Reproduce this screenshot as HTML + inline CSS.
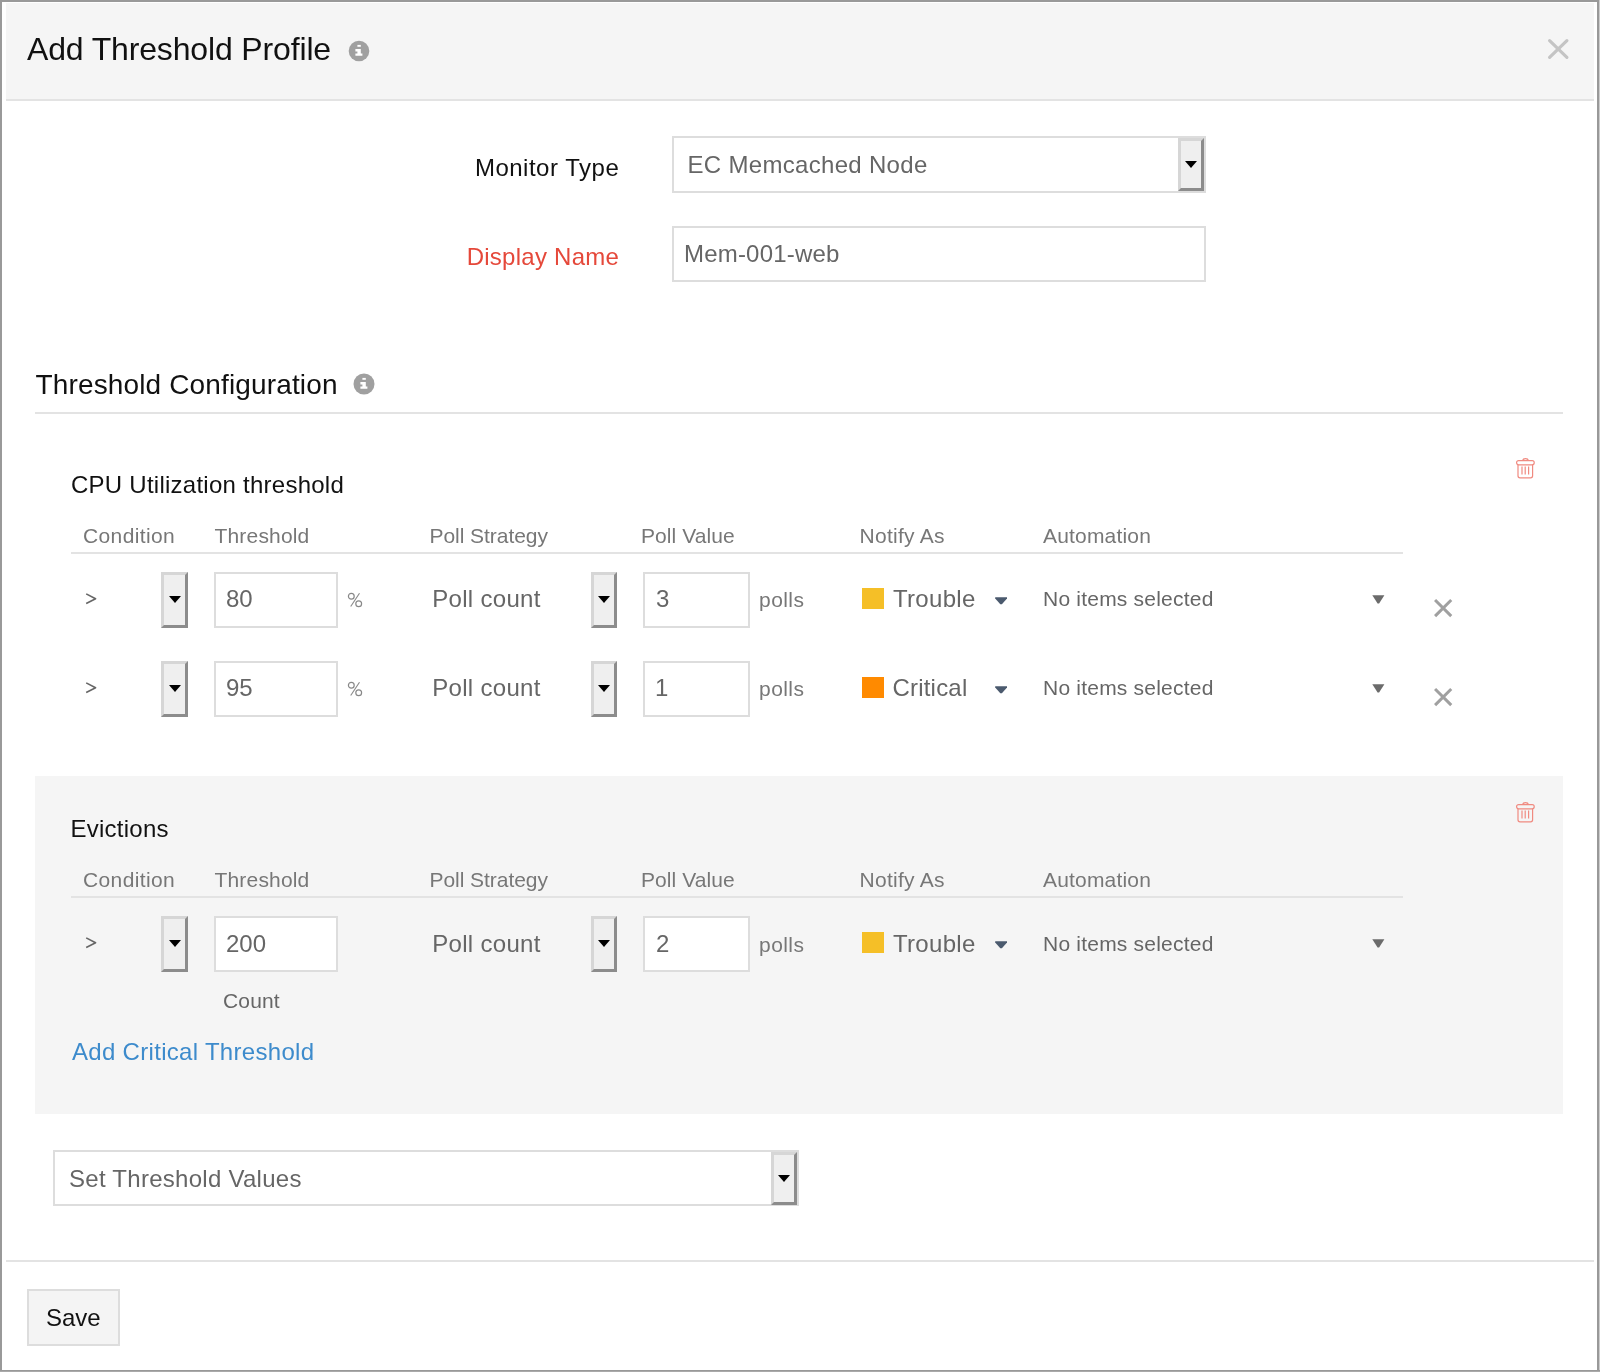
<!DOCTYPE html>
<html><head><meta charset="utf-8">
<style>
*{margin:0;padding:0;box-sizing:border-box}
html,body{width:1600px;height:1372px;overflow:hidden;background:#fff}
body{position:relative;font-family:"Liberation Sans",sans-serif}
#w{position:absolute;left:0;top:0;width:1600px;height:1372px;will-change:transform}
.a{position:absolute}
.t{position:absolute;white-space:nowrap;line-height:1}
.box{position:absolute;border:2px solid #ddd;background:#fff}
.btn3d{position:absolute;border-style:solid;border-width:3px;border-color:#d6d6d6 #8c8c8c #8c8c8c #d6d6d6;background:#efefef}
.btn3d:after{content:"";position:absolute;left:50%;top:50%;margin-left:-6px;margin-top:-4px;border-left:6px solid transparent;border-right:6px solid transparent;border-top:7px solid #000}
</style></head>
<body>
<div id="w">
<div class="a" style="left:0px;top:0px;width:1600px;height:2px;background:#999"></div>
<div class="a" style="left:0px;top:0px;width:2px;height:1372px;background:#999"></div>
<div class="a" style="left:1597px;top:0px;width:2px;height:1372px;background:#999"></div>
<div class="a" style="left:1599px;top:0px;width:1px;height:1372px;background:#ccc"></div>
<div class="a" style="left:0px;top:1370px;width:1600px;height:1px;background:#999"></div>
<div class="a" style="left:0px;top:1371px;width:1600px;height:1px;background:#aaa"></div>
<div class="a" style="left:6px;top:3px;width:1588px;height:96px;background:#f5f5f5"></div>
<div class="a" style="left:6px;top:99px;width:1588px;height:2px;background:#e3e3e3"></div>
<div class="t" id="t0" style="left:27.00px;top:33px;font-size:32px;color:#111;letter-spacing:-0.150px;">Add Threshold Profile</div>
<svg class="a" style="left:346.6px;top:38.6px" width="24" height="24" viewBox="0 0 24 24">
<circle cx="12" cy="12" r="10.3" fill="#a0a0a0"/>
<rect x="10.4" y="5.9" width="3.4" height="1.9" fill="#fff"/>
<path d="M8.4 10.1h5.4v4.3h1.6v2.3H8.4v-2.3h2v-1.9H8.4z" fill="#fff"/>
</svg>
<svg class="a" style="left:1547.5px;top:38.75px;overflow:visible" width="20.5" height="20" viewBox="0 0 20.5 20">
<path d="M1.6 1.6L18.9 18.4M18.9 1.6L1.6 18.4" stroke="#c4c4c4" stroke-width="3.2" stroke-linecap="round"/></svg>
<div class="t" id="t1" style="left:474.90px;top:156px;font-size:24px;color:#111;letter-spacing:0.509px;">Monitor Type</div>
<div class="t" id="t2" style="left:466.70px;top:245px;font-size:24px;color:#e5483a;letter-spacing:0.255px;">Display Name</div>
<div class="box" style="left:672px;top:136px;width:534px;height:57px;background:#fff"></div>
<div class="t" id="t3" style="left:687.50px;top:153px;font-size:24px;color:#666;letter-spacing:0.312px;">EC Memcached Node</div>
<div class="btn3d" style="left:1178px;top:138px;width:26px;height:53px"></div>
<div class="box" style="left:672px;top:226px;width:534px;height:56px;background:#fff"></div>
<div class="t" id="t4" style="left:684.00px;top:242px;font-size:24px;color:#666;letter-spacing:0.200px;">Mem-001-web</div>
<div class="t" id="t5" style="left:35.50px;top:371px;font-size:28px;color:#111;letter-spacing:0.145px;">Threshold Configuration</div>
<svg class="a" style="left:352px;top:371.5px" width="24" height="24" viewBox="0 0 24 24">
<circle cx="12" cy="12" r="10.5" fill="#a0a0a0"/>
<rect x="10.4" y="5.9" width="3.4" height="1.9" fill="#fff"/>
<path d="M8.4 10.1h5.4v4.3h1.6v2.3H8.4v-2.3h2v-1.9H8.4z" fill="#fff"/>
</svg>
<div class="a" style="left:35px;top:412px;width:1528px;height:2px;background:#e3e3e3"></div>
<svg class="a" style="left:1514px;top:456px" width="24" height="24" viewBox="0 0 24 24">
<g fill="none" stroke="#f08a80" stroke-width="1.2">
<path d="M8.5 4.6c0.3-1.3 1.3-2 3-2s2.7.7 3 2"/>
<rect x="2.6" y="4.6" width="17.6" height="4.2" rx="2"/>
<path d="M4 8.8v11c0 1.3.8 2 2 2h10.6c1.2 0 2-.7 2-2v-11"/>
<path d="M8 10.6v7.8M11.2 10.6v7.8M14.6 10.6v7.8"/>
</g></svg>
<div class="t" id="t6" style="left:71.00px;top:473px;font-size:24px;color:#111;letter-spacing:0.250px;">CPU Utilization threshold</div>
<div class="t" id="t7" style="left:83.00px;top:525px;font-size:21px;color:#777;letter-spacing:0.375px;">Condition</div>
<div class="t" id="t8" style="left:214.50px;top:525px;font-size:21px;color:#777;letter-spacing:0.175px;">Threshold</div>
<div class="t" id="t9" style="left:429.50px;top:525px;font-size:21px;color:#777;letter-spacing:-0.050px;">Poll Strategy</div>
<div class="t" id="t10" style="left:641.00px;top:525px;font-size:21px;color:#777;letter-spacing:0.067px;">Poll Value</div>
<div class="t" id="t11" style="left:859.50px;top:525px;font-size:21px;color:#777;letter-spacing:0.275px;">Notify As</div>
<div class="t" id="t12" style="left:1043.00px;top:525px;font-size:21px;color:#777;letter-spacing:0.178px;">Automation</div>
<div class="a" style="left:71px;top:552px;width:1332px;height:2px;background:#e3e3e3"></div>
<svg class="a" style="left:85px;top:592px" width="14" height="14" viewBox="0 0 14 14"><path d="M1.2 1.9L10.6 6.7L1.2 11.5" fill="none" stroke="#666" stroke-width="1.6" stroke-linejoin="round"/></svg>
<div class="btn3d" style="left:161px;top:572px;width:27px;height:56px"></div>
<div class="box" style="left:214px;top:572px;width:124px;height:56px;background:#fff"></div>
<div class="t" id="t13" style="left:226.00px;top:587px;font-size:24px;color:#666;">80</div>
<svg class="a" style="left:346px;top:591px" width="18" height="18" viewBox="0 0 18 18"><g fill="none" stroke="#888" stroke-width="1.2"><circle cx="5.3" cy="5.3" r="2.9"/><circle cx="12.7" cy="12.7" r="2.9"/><path d="M13.5 2.2L4.7 15.5" stroke-width="1.1"/></g></svg>
<div class="t" id="t14" style="left:432.25px;top:587px;font-size:24px;color:#666;letter-spacing:0.311px;">Poll count</div>
<div class="btn3d" style="left:591px;top:572px;width:26px;height:56px"></div>
<div class="box" style="left:643px;top:572px;width:107px;height:56px;background:#fff"></div>
<div class="t" id="t15" style="left:656.00px;top:587px;font-size:24px;color:#666;">3</div>
<div class="t" id="t16" style="left:759.00px;top:589px;font-size:21px;color:#777;letter-spacing:0.450px;">polls</div>
<div class="a" style="left:862px;top:587.5px;width:22px;height:21.5px;background:#f5bf27"></div>
<div class="t" id="t17" style="left:893.00px;top:587px;font-size:24px;color:#666;letter-spacing:0.300px;">Trouble</div>
<svg class="a" style="left:995px;top:596.8px;" width="13" height="8" viewBox="0 0 13 8"><path d="M0.2 0.2H12V1.6L6.9 7.2H5.3L0.2 1.6z" fill="#4b5a6e"/></svg>
<div class="t" id="t18" style="left:1043.00px;top:588px;font-size:21px;color:#666;letter-spacing:0.213px;">No items selected</div>
<svg class="a" style="left:1372.2px;top:594.8px;filter:blur(0.35px);" width="13" height="9" viewBox="0 0 13 9"><path d="M0.3 0.3H12.4L7.1 8.6H5.6z" fill="#6b6b6b"/></svg>
<svg class="a" style="left:1433.5px;top:598.7px;overflow:visible" width="18.3" height="18.2" viewBox="0 0 18.3 18.2">
<path d="M1.0600706713780919 1.0600706713780919L17.23992932862191 17.139929328621907M17.23992932862191 1.0600706713780919L1.0600706713780919 17.139929328621907" stroke="#a0a0a0" stroke-width="3"/></svg>
<svg class="a" style="left:85px;top:681px" width="14" height="14" viewBox="0 0 14 14"><path d="M1.2 1.9L10.6 6.7L1.2 11.5" fill="none" stroke="#666" stroke-width="1.6" stroke-linejoin="round"/></svg>
<div class="btn3d" style="left:161px;top:661px;width:27px;height:56px"></div>
<div class="box" style="left:214px;top:661px;width:124px;height:56px;background:#fff"></div>
<div class="t" id="t19" style="left:226.00px;top:676px;font-size:24px;color:#666;">95</div>
<svg class="a" style="left:346px;top:680px" width="18" height="18" viewBox="0 0 18 18"><g fill="none" stroke="#888" stroke-width="1.2"><circle cx="5.3" cy="5.3" r="2.9"/><circle cx="12.7" cy="12.7" r="2.9"/><path d="M13.5 2.2L4.7 15.5" stroke-width="1.1"/></g></svg>
<div class="t" id="t20" style="left:432.25px;top:676px;font-size:24px;color:#666;letter-spacing:0.311px;">Poll count</div>
<div class="btn3d" style="left:591px;top:661px;width:26px;height:56px"></div>
<div class="box" style="left:643px;top:661px;width:107px;height:56px;background:#fff"></div>
<div class="t" id="t21" style="left:655.00px;top:676px;font-size:24px;color:#666;">1</div>
<div class="t" id="t22" style="left:759.00px;top:678px;font-size:21px;color:#777;letter-spacing:0.450px;">polls</div>
<div class="a" style="left:862px;top:676.5px;width:22px;height:21.5px;background:#ff8a00"></div>
<div class="t" id="t23" style="left:892.50px;top:676px;font-size:24px;color:#666;letter-spacing:0.200px;">Critical</div>
<svg class="a" style="left:995px;top:685.8px;" width="13" height="8" viewBox="0 0 13 8"><path d="M0.2 0.2H12V1.6L6.9 7.2H5.3L0.2 1.6z" fill="#4b5a6e"/></svg>
<div class="t" id="t24" style="left:1043.00px;top:677px;font-size:21px;color:#666;letter-spacing:0.213px;">No items selected</div>
<svg class="a" style="left:1372.2px;top:683.8px;filter:blur(0.35px);" width="13" height="9" viewBox="0 0 13 9"><path d="M0.3 0.3H12.4L7.1 8.6H5.6z" fill="#6b6b6b"/></svg>
<svg class="a" style="left:1433.5px;top:687.7px;overflow:visible" width="18.3" height="18.2" viewBox="0 0 18.3 18.2">
<path d="M1.0600706713780919 1.0600706713780919L17.23992932862191 17.139929328621907M17.23992932862191 1.0600706713780919L1.0600706713780919 17.139929328621907" stroke="#a0a0a0" stroke-width="3"/></svg>
<div class="a" style="left:35px;top:776px;width:1528px;height:338px;background:#f5f5f5"></div>
<svg class="a" style="left:1514px;top:800px" width="24" height="24" viewBox="0 0 24 24">
<g fill="none" stroke="#f08a80" stroke-width="1.2">
<path d="M8.5 4.6c0.3-1.3 1.3-2 3-2s2.7.7 3 2"/>
<rect x="2.6" y="4.6" width="17.6" height="4.2" rx="2"/>
<path d="M4 8.8v11c0 1.3.8 2 2 2h10.6c1.2 0 2-.7 2-2v-11"/>
<path d="M8 10.6v7.8M11.2 10.6v7.8M14.6 10.6v7.8"/>
</g></svg>
<div class="t" id="t25" style="left:70.50px;top:817px;font-size:24px;color:#111;letter-spacing:0.250px;">Evictions</div>
<div class="t" id="t26" style="left:83.00px;top:869px;font-size:21px;color:#777;letter-spacing:0.375px;">Condition</div>
<div class="t" id="t27" style="left:214.50px;top:869px;font-size:21px;color:#777;letter-spacing:0.175px;">Threshold</div>
<div class="t" id="t28" style="left:429.50px;top:869px;font-size:21px;color:#777;letter-spacing:-0.050px;">Poll Strategy</div>
<div class="t" id="t29" style="left:641.00px;top:869px;font-size:21px;color:#777;letter-spacing:0.067px;">Poll Value</div>
<div class="t" id="t30" style="left:859.50px;top:869px;font-size:21px;color:#777;letter-spacing:0.275px;">Notify As</div>
<div class="t" id="t31" style="left:1043.00px;top:869px;font-size:21px;color:#777;letter-spacing:0.178px;">Automation</div>
<div class="a" style="left:71px;top:896px;width:1332px;height:2px;background:#e3e3e3"></div>
<svg class="a" style="left:85px;top:936px" width="14" height="14" viewBox="0 0 14 14"><path d="M1.2 1.9L10.6 6.7L1.2 11.5" fill="none" stroke="#666" stroke-width="1.6" stroke-linejoin="round"/></svg>
<div class="btn3d" style="left:161px;top:916px;width:27px;height:56px"></div>
<div class="box" style="left:214px;top:916px;width:124px;height:56px;background:#fff"></div>
<div class="t" id="t32" style="left:226.00px;top:932px;font-size:24px;color:#666;">200</div>
<div class="t" id="t33" style="left:432.25px;top:932px;font-size:24px;color:#666;letter-spacing:0.311px;">Poll count</div>
<div class="btn3d" style="left:591px;top:916px;width:26px;height:56px"></div>
<div class="box" style="left:643px;top:916px;width:107px;height:56px;background:#fff"></div>
<div class="t" id="t34" style="left:656.00px;top:932px;font-size:24px;color:#666;">2</div>
<div class="t" id="t35" style="left:759.00px;top:934px;font-size:21px;color:#777;letter-spacing:0.450px;">polls</div>
<div class="a" style="left:862px;top:931.5px;width:22px;height:21.5px;background:#f5bf27"></div>
<div class="t" id="t36" style="left:893.00px;top:932px;font-size:24px;color:#666;letter-spacing:0.300px;">Trouble</div>
<svg class="a" style="left:995px;top:940.8px;" width="13" height="8" viewBox="0 0 13 8"><path d="M0.2 0.2H12V1.6L6.9 7.2H5.3L0.2 1.6z" fill="#4b5a6e"/></svg>
<div class="t" id="t37" style="left:1043.00px;top:933px;font-size:21px;color:#666;letter-spacing:0.213px;">No items selected</div>
<svg class="a" style="left:1372.2px;top:938.8px;filter:blur(0.35px);" width="13" height="9" viewBox="0 0 13 9"><path d="M0.3 0.3H12.4L7.1 8.6H5.6z" fill="#6b6b6b"/></svg>
<div class="t" id="t38" style="left:223.00px;top:990px;font-size:21px;color:#666;letter-spacing:0.150px;">Count</div>
<div class="t" id="t39" style="left:72.00px;top:1040px;font-size:24px;color:#3d8bcc;letter-spacing:0.305px;">Add Critical Threshold</div>
<div class="box" style="left:53px;top:1150px;width:746px;height:56px;background:#fff"></div>
<div class="t" id="t40" style="left:69.00px;top:1167px;font-size:24px;color:#666;letter-spacing:0.274px;">Set Threshold Values</div>
<div class="btn3d" style="left:771px;top:1152px;width:26px;height:53px"></div>
<div class="a" style="left:6px;top:1260px;width:1588px;height:2px;background:#e3e3e3"></div>
<div class="a" style="left:27px;top:1289px;width:93px;height:57px;border:2px solid #ddd;background:#f4f4f4"></div>
<div class="t" id="t41" style="left:46.00px;top:1306px;font-size:24px;color:#111;">Save</div>

</div>
</body></html>
